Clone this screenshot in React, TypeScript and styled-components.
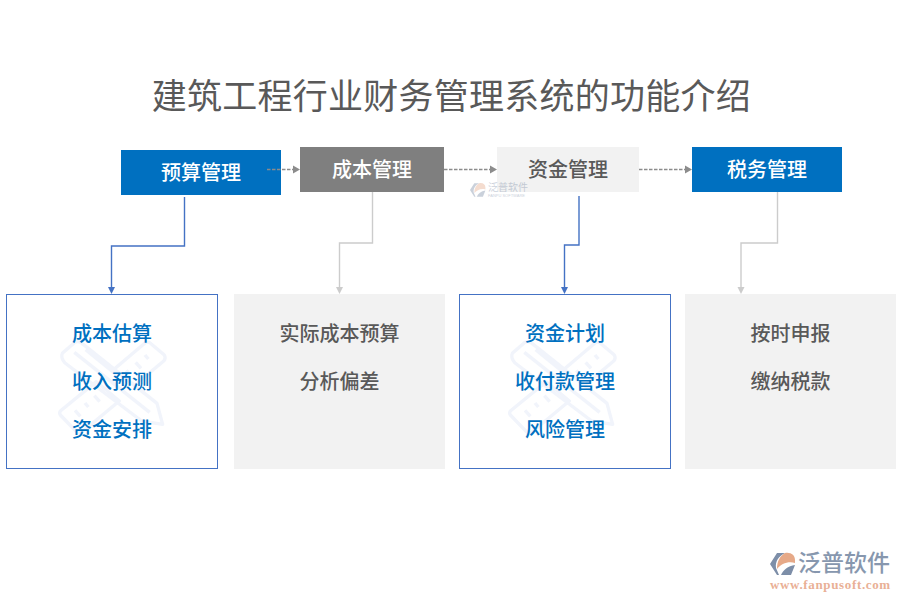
import React from 'react'
import styled, { createGlobalStyle } from 'styled-components'

const blue = '#0070c0'
const lineBlue = '#4472c4'
const lineGray = '#cccccc'
const panelGray = '#f2f2f2'
const textGray = '#595959'
const cjk = '"Liberation Serif", "Noto Sans CJK SC", serif'

const GlobalStyle = createGlobalStyle`
  html, body {
    margin: 0;
    padding: 0;
    background: #fff;
  }
`

const Page = styled.div`
  position: relative;
  width: 900px;
  height: 600px;
  overflow: hidden;
  background: #fff;
  font-family: ${cjk};
`

const Title = styled.h1`
  margin: 0;
  padding: 73px 0 0 3px;
  height: 50px;
  line-height: 50px;
  font-size: 35px;
  font-weight: 400;
  letter-spacing: 0.25px;
  text-align: center;
  color: ${textGray};
`

const StepRow = styled.div`
  display: flex;
  align-items: flex-start;
  margin-top: 24px;
  padding-left: 121px;
`

const tones = {
  blue: { bg: blue, fg: '#fff' },
  dark: { bg: '#7f7f7f', fg: '#fff' },
  light: { bg: panelGray, fg: textGray },
}

const Step = styled.div<{ $tone: keyof typeof tones; $width: number; $drop?: number }>`
  display: flex;
  align-items: center;
  justify-content: center;
  box-sizing: border-box;
  width: ${(p) => p.$width}px;
  height: 45px;
  padding-bottom: 2px;
  margin-top: ${(p) => p.$drop ?? 0}px;
  font-size: 20px;
  font-weight: 500;
  background: ${(p) => tones[p.$tone].bg};
  color: ${(p) => tones[p.$tone].fg};
`

const ArrowSlot = styled.svg<{ $overlap?: number }>`
  display: block;
  position: relative;
  flex: none;
  margin-left: ${(p) => -(p.$overlap ?? 0)}px;
`

const DashArrow = ({ width, overlap }: { width: number; overlap?: number }) => (
  <ArrowSlot $overlap={overlap} width={width} height={45} viewBox={`0 0 ${width} 45`}>
    <line x1={0} y1={22.5} x2={width - 7} y2={22.5} stroke="#8c8c8c" strokeWidth={1.5} strokeDasharray="3.5 1.5" />
    <polygon points={`${width - 7},18.5 ${width},22.5 ${width - 7},26.5`} fill="#8c8c8c" />
  </ArrowSlot>
)

const Columns = styled.div`
  display: flex;
  align-items: flex-start;
  margin-top: -3px;
  padding-left: 6px;
`

const Column = styled.div<{ $width: number; $gap: number }>`
  display: flex;
  flex-direction: column;
  flex: none;
  width: ${(p) => p.$width}px;
  margin-left: ${(p) => p.$gap}px;
`

const ElbowSvg = styled.svg`
  display: block;
`

type ElbowProps = { from: number; to: number; start: number; mid: number; color: string; width: number }

const Elbow = ({ from, to, start, mid, color, width }: ElbowProps) => (
  <ElbowSvg width={width} height={102} viewBox={`0 0 ${width} 102`}>
    <polyline
      points={`${from},${start} ${from},${mid} ${to},${mid} ${to},95`}
      fill="none"
      stroke={color}
      strokeWidth={1.4}
    />
    <polygon points={`${to - 3.5},95 ${to + 3.5},95 ${to},102`} fill={color} />
  </ElbowSvg>
)

const Card = styled.div<{ $outlined?: boolean }>`
  position: relative;
  box-sizing: border-box;
  height: 175px;
  padding-top: 15px;
  border: 1px solid ${(p) => (p.$outlined ? lineBlue : panelGray)};
  background: ${(p) => (p.$outlined ? '#fff' : panelGray)};
  color: ${(p) => (p.$outlined ? blue : textGray)};
`

const Item = styled.div`
  position: relative;
  height: 48px;
  line-height: 48px;
  font-size: 20px;
  font-weight: 500;
  text-align: center;
`

const MarkSvg = styled.svg<{ $left: number }>`
  position: absolute;
  left: ${(p) => p.$left}px;
  top: 40px;
`

// ruler and pencil crossed, sits behind the list
const ToolsMark = ({ left }: { left: number }) => (
  <MarkSvg $left={left} width={125} height={120} viewBox="0 0 375 360">
    <g fill="none" stroke="#f1f4fb" strokeWidth={10} strokeLinejoin="round">
      <path d="M34 55 L72 22 Q84 16 94 26 L318 205 L335 268 L272 258 L42 84 Q28 68 34 55Z" />
      <path d="M70 52 L296 232 M104 44 L200 122" />
      <path d="M28 228 L136 140 L205 198 L92 292 Q84 296 76 290 L28 240 Q24 234 28 228Z" />
      <path d="M190 102 L282 24 Q292 18 300 26 L340 60 Q346 70 338 78 L252 150" />
      <path d="M72 226 L88 244 M102 204 L112 216 M130 182 L146 200 M226 106 L236 118 M254 82 L270 100 M282 60 L292 72" />
    </g>
  </MarkSvg>
)

const BrandBox = styled.div`
  position: absolute;
  right: 10px;
  bottom: 8px;
  width: 120px;
`

const BrandTop = styled.div`
  display: flex;
  align-items: center;
  gap: 2px;
`

const BrandName = styled.div`
  font-size: 23px;
  line-height: 27px;
  font-weight: 500;
  color: #8797ae;
  white-space: nowrap;
`

const BrandUrl = styled.div`
  margin-top: 1px;
  font-family: "Liberation Serif", serif;
  font-size: 13px;
  line-height: 14px;
  font-weight: 700;
  letter-spacing: 0.65px;
  color: #e9b096;
  white-space: nowrap;
`

const Stamp = styled.div`
  position: absolute;
  left: 470px;
  top: 182px;
  display: flex;
  gap: 2px;
  opacity: 0.4;
`

const StampName = styled.div`
  font-size: 10px;
  line-height: 11px;
  color: #7d8ea8;
`

const StampSub = styled.div`
  font-family: "Liberation Sans", sans-serif;
  font-size: 4px;
  line-height: 5px;
  color: #7d8ea8;
  white-space: nowrap;
`

const LogoMark = ({ size }: { size: number }) => (
  <svg width={size} height={size} viewBox="0 0 26 24">
    <path d="M7 1 H15 C9 4 5 9 6 16 L9 23 H7 L0 12Z" fill="#7d8ea8" />
    <path d="M15 1 C21 0 25 3 25 8 L25 11 C18 9 11 12 7 17 C7 9 10 4 15 1Z" fill="#e6a988" />
    <path d="M11 23 C13 18 18 14 25 13 L21 23Z" fill="#7d8ea8" />
  </svg>
)

const App = () => (
  <Page>
    <GlobalStyle />
    <Title>建筑工程行业财务管理系统的功能介绍</Title>

    <StepRow>
      <Step $tone="blue" $width={160} $drop={3}>预算管理</Step>
      <DashArrow width={33} overlap={14} />
      <Step $tone="dark" $width={144}>成本管理</Step>
      <DashArrow width={53} />
      <Step $tone="light" $width={142}>资金管理</Step>
      <DashArrow width={53} />
      <Step $tone="blue" $width={150}>税务管理</Step>
    </StepRow>

    <Stamp>
      <LogoMark size={16} />
      <div>
        <StampName>泛普软件</StampName>
        <StampSub>FANPU SOFTWARE</StampSub>
      </div>
    </Stamp>

    <Columns>
      <Column $width={212} $gap={0}>
        <Elbow width={212} from={178.5} to={105.5} start={5} mid={54} color={lineBlue} />
        <Card $outlined>
          <ToolsMark left={44} />
          <Item>成本估算</Item>
          <Item>收入预测</Item>
          <Item>资金安排</Item>
        </Card>
      </Column>
      <Column $width={211} $gap={16}>
        <Elbow width={211} from={138.5} to={105.5} start={0} mid={51} color={lineGray} />
        <Card>
          <Item>实际成本预算</Item>
          <Item>分析偏差</Item>
        </Card>
      </Column>
      <Column $width={212} $gap={14}>
        <Elbow width={212} from={120} to={105.5} start={4} mid={53} color={lineBlue} />
        <Card $outlined>
          <ToolsMark left={41} />
          <Item>资金计划</Item>
          <Item>收付款管理</Item>
          <Item>风险管理</Item>
        </Card>
      </Column>
      <Column $width={211} $gap={14}>
        <Elbow width={211} from={92.5} to={56} start={0} mid={51} color={lineGray} />
        <Card>
          <Item>按时申报</Item>
          <Item>缴纳税款</Item>
        </Card>
      </Column>
    </Columns>

    <BrandBox>
      <BrandTop>
        <LogoMark size={26} />
        <BrandName>泛普软件</BrandName>
      </BrandTop>
      <BrandUrl>www.fanpusoft.com</BrandUrl>
    </BrandBox>
  </Page>
)

export default App
